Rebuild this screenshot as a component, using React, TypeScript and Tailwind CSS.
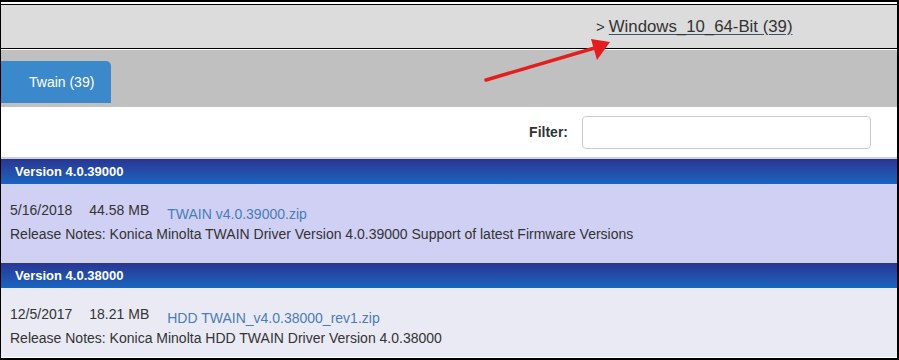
import React from "react";

export default function App() {
  return (
    <div
      className="relative w-[899px] h-[360px] overflow-hidden bg-white border-l border-r-2 border-b-2 border-black text-[#333]"
      style={{ fontFamily: '"Liberation Sans", Arial, sans-serif' }}
    >
      <div className="h-[2px] bg-black" />
      <div className="h-[2px] bg-white" />
      <div className="h-[45px] bg-[#dcdcdc] border-t border-b border-black flex items-center">
        <div className="ml-[595px] flex items-center text-[16.8px] leading-none mt-[1px]">
          <span className="text-[#333] mr-[4px] text-[15px]">&gt;</span>
          <span className="underline decoration-[#3a5570] underline-offset-2 text-[#333]">
            Windows_10_64-Bit (39)
          </span>
        </div>
      </div>
      <div className="h-[1px] bg-white" />
      <div className="h-[57px] bg-[#c0c0c0] pt-[11px]">
        <div className="w-[110px] h-[42px] bg-[#3b89ca] rounded-tr-[5px] flex items-center pl-[28px] text-white text-[14px]">
          Twain (39)
        </div>
      </div>
      <div className="h-[50px] flex items-center justify-end pr-[26px]">
        <span className="font-bold text-[14px] text-[#333] mr-[14px]">Filter:</span>
        <div className="w-[289px] h-[33px] border border-[#cccccc] rounded-[4px] bg-white" />
      </div>
      <Section
        version="Version 4.0.39000"
        date="5/16/2018"
        size="44.58 MB"
        file="TWAIN v4.0.39000.zip"
        notes="Release Notes: Konica Minolta TWAIN Driver Version 4.0.39000 Support of latest Firmware Versions"
        bg="bg-[#d0d0f5]"
        h="h-[77px]"
      />
      <Section
        version="Version 4.0.38000"
        date="12/5/2017"
        size="18.21 MB"
        file="HDD TWAIN_v4.0.38000_rev1.zip"
        notes="Release Notes: Konica Minolta HDD TWAIN Driver Version 4.0.38000"
        bg="bg-[#eaeaf4]"
        h="h-[69px]"
      />
      <svg
        className="absolute left-0 top-0 pointer-events-none"
        width="899"
        height="360"
      >
        <line x1="485" y1="80" x2="597" y2="47" stroke="#e41e1e" strokeWidth="3.5" strokeLinecap="round" />
        <polygon points="609,42 590,39 596,60" fill="#e41e1e" />
      </svg>
    </div>
  );
}

function Section(props: {
  version: string;
  date: string;
  size: string;
  file: string;
  notes: string;
  bg: string;
  h: string;
}) {
  return (
    <div>
      <div className="h-[2px] bg-[#d2d2d6]" />
      <div className="h-[25px] bg-gradient-to-b from-[#283593] to-[#1565c0] flex items-center pl-[14px] text-white font-bold text-[13px]">
        {props.version}
      </div>
      <div className={`${props.bg} ${props.h} pl-[9px] pt-[18px] text-[14px]`}>
        <div className="flex items-start leading-[16px]">
          <span>{props.date}</span>
          <span className="ml-[17px]">{props.size}</span>
          <span className="ml-[18px] mt-[4px] text-[#4a7cb8]">{props.file}</span>
        </div>
        <div className="mt-[4px] leading-[16px]">{props.notes}</div>
      </div>
    </div>
  );
}
